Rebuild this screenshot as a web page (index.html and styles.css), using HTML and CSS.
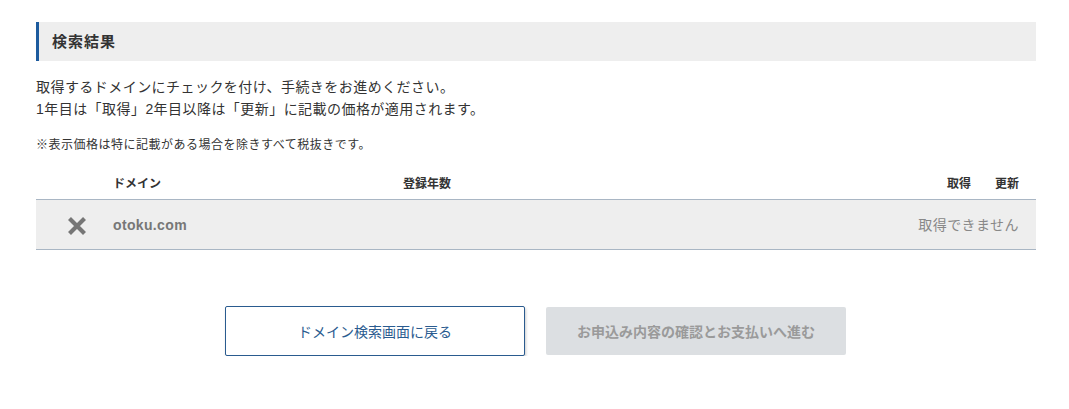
FILE: index.html
```html
<!DOCTYPE html>
<html lang="ja">
<head>
<meta charset="utf-8">
<title>検索結果</title>
<link rel="stylesheet" href="styles.css">
</head>
<body>
<main class="page">
  <h2 class="heading">検索結果</h2>
  <p class="lead">取得するドメインにチェックを付け、手続きをお進めください。<br>1年目は「取得」2年目以降は「更新」に記載の価格が適用されます。</p>
  <p class="note">※表示価格は特に記載がある場合を除きすべて税抜きです。</p>
  <div class="table">
    <div class="thead">
      <span class="c-check"></span>
      <span class="c-domain">ドメイン</span>
      <span class="c-years">登録年数</span>
      <span class="c-get">取得</span>
      <span class="c-renew">更新</span>
    </div>
    <div class="row">
      <span class="c-check">
        <svg class="x-icon" width="20" height="20" viewBox="0 0 20 20"><path d="M2.5 2.5 L17.5 17.5 M17.5 2.5 L2.5 17.5" stroke="#767676" stroke-width="4.2" stroke-linecap="butt"/></svg>
      </span>
      <span class="c-domain domain-name">otoku.com</span>
      <span class="c-years"></span>
      <span class="c-status">取得できません</span>
    </div>
  </div>
  <div class="actions">
    <button class="btn btn-back">ドメイン検索画面に戻る</button>
    <button class="btn btn-next" disabled>お申込み内容の確認とお支払いへ進む</button>
  </div>
</main>
</body>
</html>
```

FILE: styles.css
```css
* { box-sizing: border-box; }
body {
  margin: 0;
  background: #fff;
  color: #333;
  font-family: "Liberation Sans", "Noto Sans CJK JP", sans-serif;
}
.page {
  width: 1000px;
  margin-left: 36px;
  padding-top: 22px;
}
.heading {
  margin: 0;
  height: 39px;
  background: #eeeeee;
  border-left: 3px solid #1d5b9e;
  padding-left: 13px;
  font-size: 15px;
  font-weight: bold;
  line-height: 39px;
  letter-spacing: 1px;
  color: #333;
}
.lead {
  margin: 15px 0 0;
  font-size: 14px;
  line-height: 22px;
  letter-spacing: 0.45px;
  color: #333;
}
.note {
  margin: 16px 0 0;
  font-size: 12px;
  line-height: 18px;
  letter-spacing: 0.5px;
  color: #333;
}
.table {
  margin-top: 13px;
}
.thead, .row {
  display: grid;
  grid-template-columns: 77px 290px 1fr auto auto;
  align-items: center;
}
.thead {
  height: 32px;
  font-size: 12px;
  font-weight: bold;
  line-height: 18px;
  color: #333;
  padding-top: 2px;
}
.thead .c-get { padding-right: 24px; }
.thead .c-renew { padding-right: 17px; }
.row {
  height: 51px;
  background: #eeeeee;
  border-top: 1px solid #a9b6c4;
  border-bottom: 1px solid #a9b6c4;
}
.row .c-check {
  display: flex;
  padding-left: 31px;
  padding-top: 2px;
}
.domain-name {
  font-size: 14px;
  font-weight: bold;
  color: #777;
  line-height: 20px;
  letter-spacing: 0.35px;
}
.c-status {
  grid-column: 4 / 6;
  text-align: right;
  padding-right: 17px;
  font-size: 14px;
  color: #888;
  line-height: 20px;
  letter-spacing: 0.45px;
}
.actions {
  display: flex;
  justify-content: center;
  align-items: center;
  gap: 21px;
  margin-top: 56px;
  padding-right: 1px;
}
.btn {
  width: 300px;
  font-family: "Liberation Sans", "Noto Sans CJK JP", sans-serif;
  font-size: 14px;
  border-radius: 2px;
}
.btn-back {
  height: 50px;
  background: #fff;
  border: 1px solid #2a5b8f;
  color: #2a5b8f;
  box-shadow: 1px 2px 3px rgba(0,0,0,0.2);
}
.btn-next {
  height: 48px;
  background: #dcdfe2;
  border: none;
  color: #9a9a9a;
  font-weight: bold;
}
```
